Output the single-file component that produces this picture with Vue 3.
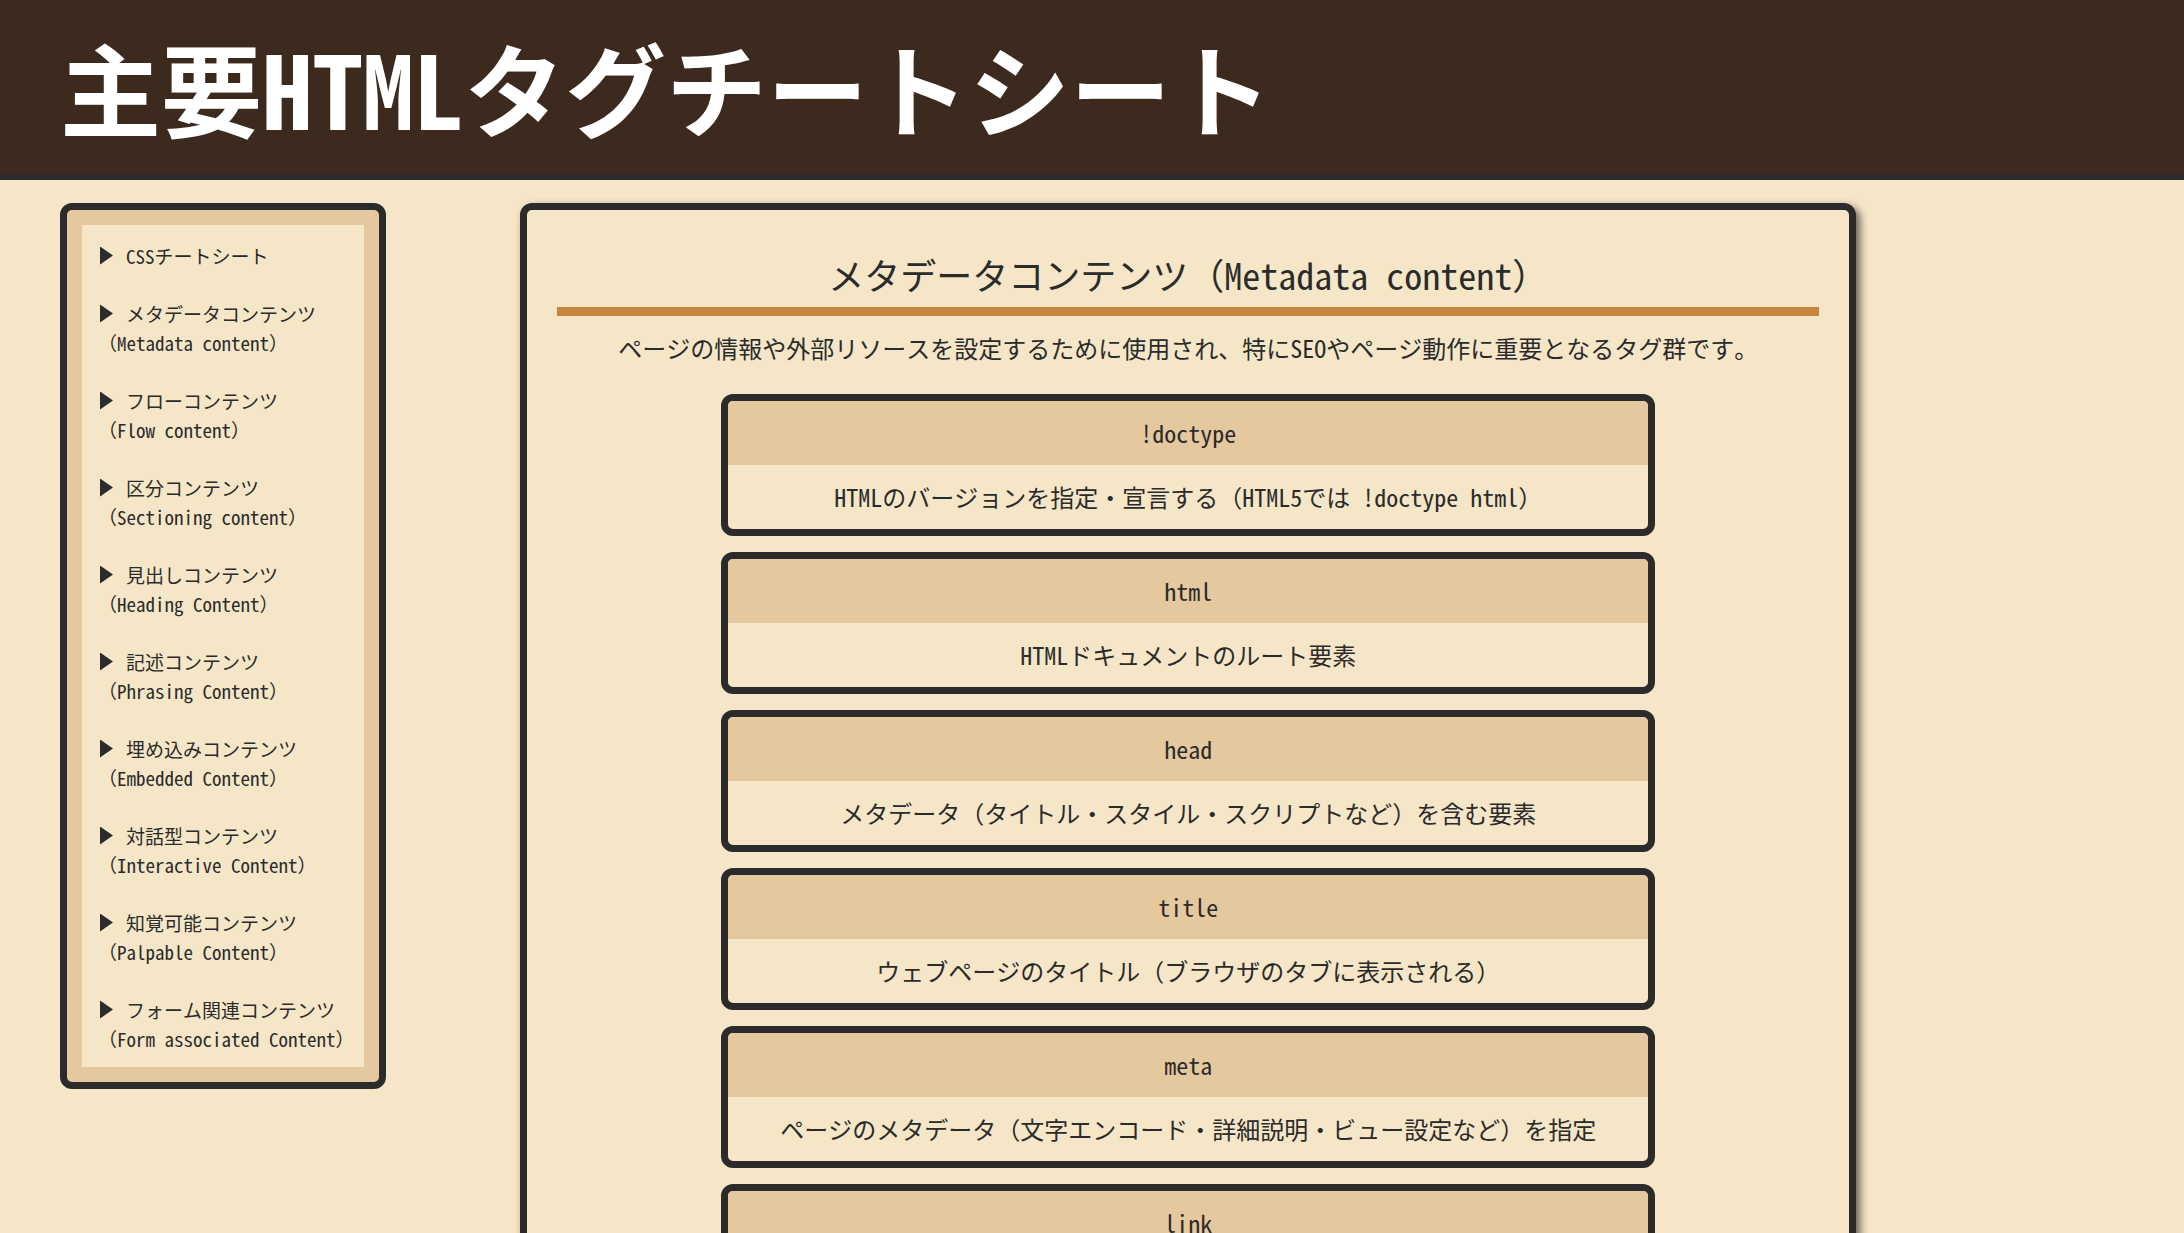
<script setup>
const navItems = [
  { label: 'CSSチートシート', href: '#css' },
  { label: 'メタデータコンテンツ', sub: '（Metadata content）', href: '#metadata' },
  { label: 'フローコンテンツ', sub: '（Flow content）', href: '#flow' },
  { label: '区分コンテンツ', sub: '（Sectioning content）', href: '#sectioning' },
  { label: '見出しコンテンツ', sub: '（Heading Content）', href: '#heading' },
  { label: '記述コンテンツ', sub: '（Phrasing Content）', href: '#phrasing' },
  { label: '埋め込みコンテンツ', sub: '（Embedded Content）', href: '#embedded' },
  { label: '対話型コンテンツ', sub: '（Interactive Content）', href: '#interactive' },
  { label: '知覚可能コンテンツ', sub: '（Palpable Content）', href: '#palpable' },
  { label: 'フォーム関連コンテンツ', sub: '（Form associated Content）', href: '#form' },
]

const tags = [
  { name: '!doctype', text: 'HTMLのバージョンを指定・宣言する（HTML5では !doctype html）' },
  { name: 'html', text: 'HTMLドキュメントのルート要素' },
  { name: 'head', text: 'メタデータ（タイトル・スタイル・スクリプトなど）を含む要素' },
  { name: 'title', text: 'ウェブページのタイトル（ブラウザのタブに表示される）' },
  { name: 'meta', text: 'ページのメタデータ（文字エンコード・詳細説明・ビュー設定など）を指定' },
  { name: 'link' },
]
</script>

<template>
  <div class="page">
    <header class="site-header">
      <h1>主要HTMLタグチートシート</h1>
    </header>
    <div class="layout">
      <nav class="side">
        <ul>
          <li v-for="item in navItems" :key="item.href">
            <a :href="item.href">
              <span class="label">{{ item.label }}</span>
              <span v-if="item.sub" class="sub">{{ item.sub }}</span>
            </a>
          </li>
        </ul>
      </nav>
      <main id="metadata" class="content">
        <h2>メタデータコンテンツ（Metadata content）</h2>
        <p class="lead">ページの情報や外部リソースを設定するために使用され、特にSEOやページ動作に重要となるタグ群です。</p>
        <div class="cards">
          <article v-for="tag in tags" :key="tag.name" class="card">
            <h3>{{ tag.name }}</h3>
            <p>{{ tag.text }}</p>
          </article>
        </div>
      </main>
    </div>
  </div>
</template>

<style>
body {
  margin: 0;
  background: #f5e6c8;
}
</style>

<style scoped>
.page {
  color: #2b2b2b;
  font-family: "Noto Sans Mono CJK JP", "Noto Sans CJK JP", monospace;
  font-size: 24px;
}

h1,
h2,
h3,
p,
ul {
  margin: 0;
  padding: 0;
}

.site-header {
  padding: 26px 60px 28px;
  background: #3c2a1f;
  border-bottom: 6px solid #2b2b2b;
  color: #fff;
}

h1 {
  font-size: 101px;
  line-height: 120px;
  font-weight: 700;
  white-space: nowrap;
}

.layout {
  display: flex;
  align-items: flex-start;
  gap: 134px;
  padding: 23px 15% 60px 60px;
}

.side {
  flex: none;
  box-sizing: border-box;
  width: 326px;
  padding: 15px;
  background: #e6c89f;
  border: 7px solid #2b2b2b;
  border-radius: 12px;
}

.side ul {
  display: flex;
  flex-direction: column;
  gap: 29px;
  padding: 16px 0 14px 16px;
  background: #f5e6c8;
  list-style: none;
}

.side a {
  color: inherit;
  text-decoration: none;
  font-size: 19px;
  line-height: 29px;
  white-space: nowrap;
}

.label,
.sub {
  display: block;
}

.label {
  display: flex;
  align-items: center;
}

.label::before {
  content: "";
  width: 13px;
  height: 18px;
  margin: 0 13px 0 2px;
  background: #2b2b2b;
  clip-path: polygon(0 0, 100% 50%, 0 100%);
}

.content {
  flex: 1;
  min-width: 0;
  padding: 42px 30px 30px;
  border: 7px solid #2b2b2b;
  border-radius: 12px;
  box-shadow: 4px 4px 8px rgba(0, 0, 0, 0.6);
  text-align: center;
}

h2 {
  padding-bottom: 10px;
  border-bottom: 9px solid #c88540;
  font-size: 36px;
  line-height: 45px;
  font-weight: 500;
}

.lead {
  padding: 14px 0 28px;
  line-height: 36px;
}

.cards {
  display: flex;
  flex-direction: column;
  gap: 16px;
  width: 74%;
  margin: 0 auto;
}

.card {
  overflow: hidden;
  border: 7px solid #2b2b2b;
  border-radius: 12px;
}

.card h3,
.card p {
  min-height: 36px;
  padding: 14px;
  font-size: 24px;
  line-height: 36px;
  font-weight: 400;
}

.card h3 {
  background: #e6c89f;
}
</style>
